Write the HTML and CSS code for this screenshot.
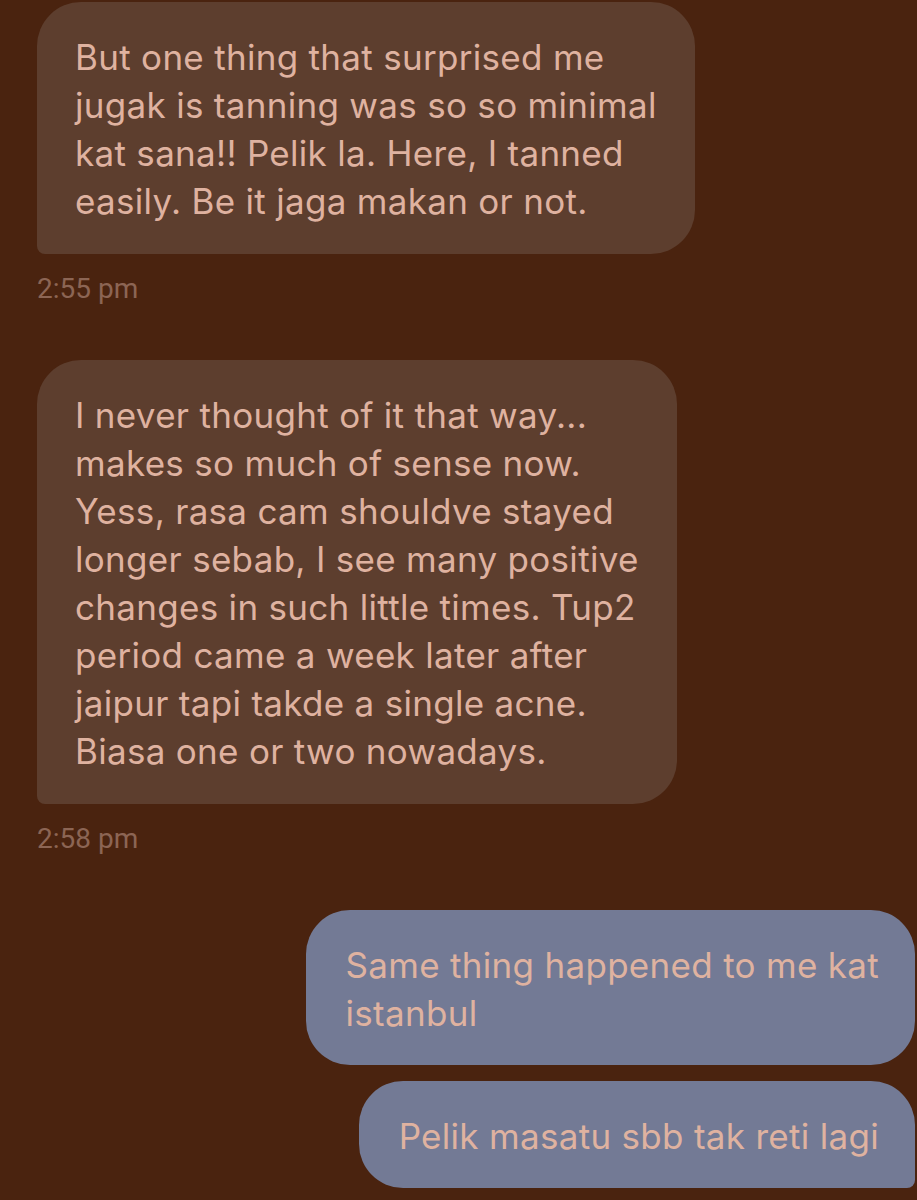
FILE: index.html
```html
<!DOCTYPE html>
<html>
<head>
<meta charset="utf-8">
<link rel="stylesheet" href="styles.css">
</head>
<body>
<main class="chat">
  <div class="group received">
    <div class="bubble in last">But one thing that surprised me<br>jugak is tanning was so so minimal<br>kat sana!! Pelik la. Here, I tanned<br>easily. Be it jaga makan or not.</div>
    <div class="time">2:55 pm</div>
  </div>
  <div class="group received">
    <div class="bubble in last">I never thought of it that way...<br>makes so much of sense now.<br>Yess, rasa cam shouldve stayed<br>longer sebab, I see many positive<br>changes in such little times. Tup2<br>period came a week later after<br>jaipur tapi takde a single acne.<br>Biasa one or two nowadays.</div>
    <div class="time">2:58 pm</div>
  </div>
  <div class="group sent">
    <div class="bubble out">Same thing happened to me kat<br>istanbul</div>
    <div class="bubble out last">Pelik masatu sbb tak reti lagi</div>
  </div>
</main>
</body>
</html>
```

FILE: styles.css
```css
html, body {
  margin: 0;
  padding: 0;
  background: #4a230f;
}
body {
  width: 917px;
  height: 1200px;
  overflow: hidden;
}
.chat {
  display: flex;
  flex-direction: column;
  padding: 2px 2px 0 37px;
}
.group {
  display: flex;
  flex-direction: column;
  gap: 16px;
}
.received {
  align-items: flex-start;
}
.sent {
  align-items: flex-end;
}
.bubble {
  font-family: "Inter", "Noto Sans", sans-serif;
  font-size: 35px;
  line-height: 48px;
  letter-spacing: 0.3px;
  color: #dfb2a0;
  padding: 31px 38px 29px 38px;
  border-radius: 44px;
  white-space: nowrap;
}
.in {
  background: #5d3e2e;
}
.in.last {
  border-bottom-left-radius: 8px;
}
.out {
  background: #737a95;
  padding: 31px 36px 28px 40px;
}
.out.last {
  border-bottom-right-radius: 8px;
}
.time {
  font-family: "Roboto", "Liberation Sans", sans-serif;
  font-size: 28px;
  line-height: 30px;
  color: #8c6554;
  margin-top: 4px;
  margin-bottom: 56px;
}
```
